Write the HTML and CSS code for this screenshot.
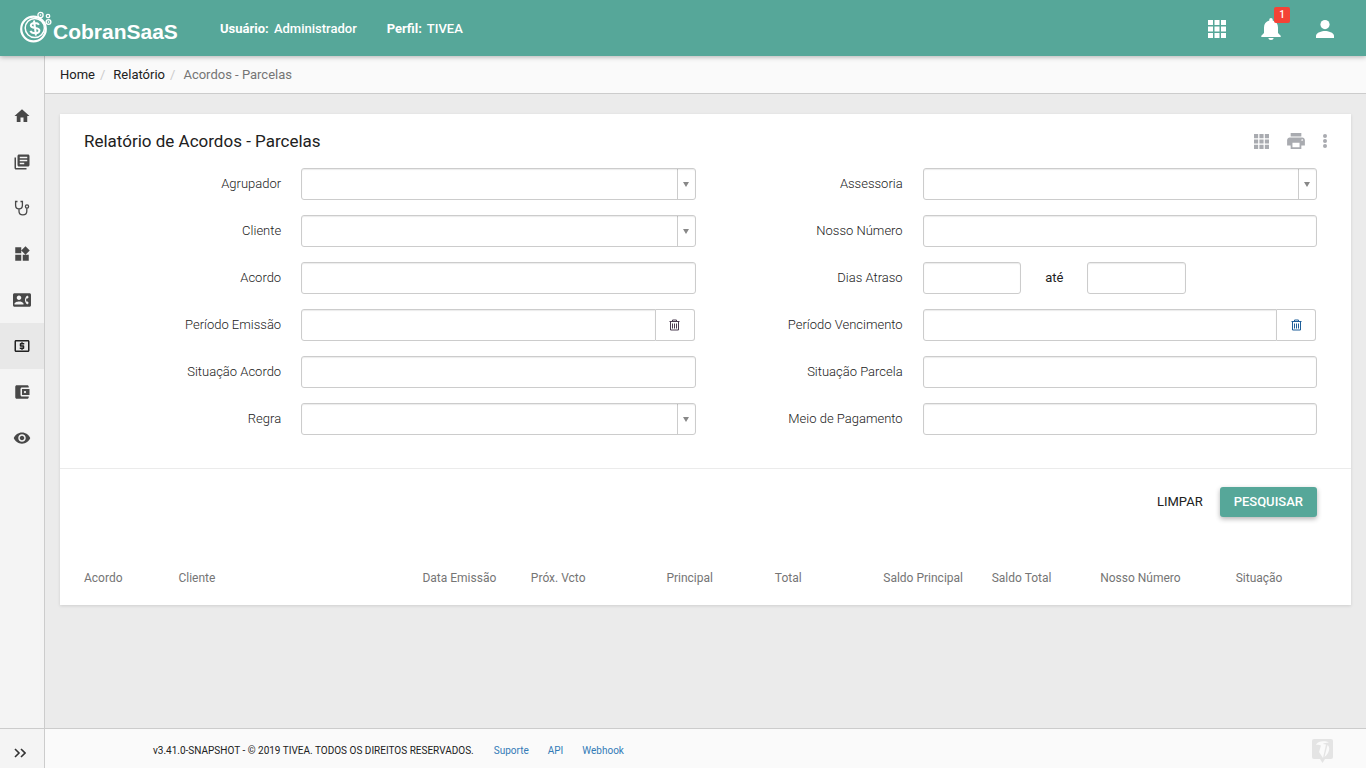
FILE: index.html
```html
<!DOCTYPE html>
<html lang="pt-BR">
<head>
  <meta charset="UTF-8" />
  <meta name="viewport" content="width=device-width, initial-scale=1.0"/>
  <title>CobranSaaS - Relatório de Acordos</title>
  <link rel="stylesheet" href="styles.css">
</head>
<body>

  <header class="topbar">
    <a class="brand" href="#">
      <svg width="33" height="34" viewBox="0 0 33 34" fill="none" stroke="#fff" aria-hidden="true">
        <circle cx="13.500" cy="18" r="12.300" stroke-width="2.200"/>
        <circle cx="14.800" cy="17" r="9.600" stroke-width="1.500"/>
        <path d="M19 13.800c-.8-1.300-2.300-1.800-4.200-1.800-2.300 0-4 1-4 2.600 0 3.600 8.600 1.400 8.600 4.900 0 1.700-1.900 2.700-4.300 2.700-2.200 0-4-.8-4.700-2.400M14 9.500l2 15" stroke-width="2"/>
        <circle cx="20.500" cy="4" r="2.600" stroke-width="1.300"/>
        <circle cx="20.500" cy="4" r="0.600"/>
        <circle cx="28" cy="5" r="1.700" stroke-width="1.300"/>
        <circle cx="28.500" cy="11" r="2.400" stroke-width="1.300"/>
        <circle cx="28.500" cy="11" r="0.600"/>
      </svg>
      <span>CobranSaaS</span>
    </a>
    <div class="user-info">
      <span><b>Usuário:</b> Administrador</span>
      <span><b>Perfil:</b> TIVEA</span>
    </div>
    <div class="top-actions">
      <button type="button" aria-label="Aplicativos">
        <svg width="18" height="18" viewBox="0 0 18 18" fill="currentColor"><path d="M0 0h5v5H0zM6.500 0h5v5h-5zM13 0h5v5h-5zM0 6.500h5v5H0zM6.500 6.500h5v5h-5zM13 6.500h5v5h-5zM0 13h5v5H0zM6.500 13h5v5h-5zM13 13h5v5h-5z"/></svg>
      </button>
      <button type="button" aria-label="Notificações">
        <svg width="20" height="22" viewBox="0 0 20 22" fill="currentColor"><path d="M10 22c1.500 0 2.600-.8 2.600-2H7.400c0 1.200 1.100 2 2.600 2zM17 15V9.500c0-3.500-1.900-6.200-5.300-7V1.700C11.700.8 11 0 10 0S8.300.8 8.300 1.700v.8C4.900 3.300 3 6 3 9.500V15L.3 17.700V19h19.400v-1.300z"/></svg>
        <span class="badge">1</span>
      </button>
      <button type="button" aria-label="Perfil">
        <svg width="18" height="18" viewBox="0 0 18 18" fill="currentColor"><circle cx="9" cy="4.600" r="4.600"/><path d="M9 11c-3 0-9 1.600-9 4.800V18h18v-2.200C18 12.600 12 11 9 11z"/></svg>
      </button>
    </div>
  </header>

  <div class="wrapper">
    <nav class="sidebar">
      <a href="#" aria-label="Início"><svg width="18" height="18" viewBox="0 0 24 24"><path d="M10 20v-6h4v6h5v-8h3L12 3 2 12h3v8z"/></svg></a>
      <a href="#" aria-label="Cadastros"><svg width="18" height="18" viewBox="0 0 24 24"><path d="M4 6H2v14c0 1.100.9 2 2 2h14v-2H4V6zm16-4H8c-1.100 0-2 .9-2 2v12c0 1.100.9 2 2 2h12c1.100 0 2-.9 2-2V4c0-1.100-.9-2-2-2zm-1 9H9V9h10v2zm-4 4H9v-2h6v2zm4-8H9V5h10v2z"/></svg></a>
      <a href="#" aria-label="Diagnóstico"><svg class="outline" width="16" height="16" viewBox="0 0 16 16"><path d="M3.500 1.500H1.600v3.700c0 2.200 1.300 3.700 3.400 3.700s3.400-1.500 3.400-3.700V1.500H6.500M5 9v2.300c0 2 1.500 3.600 3.800 3.600s4-1.600 4-3.600V8.200"/><circle cx="13" cy="6.500" r="1.600"/></svg></a>
      <a href="#" aria-label="Módulos"><svg width="18" height="18" viewBox="0 0 24 24"><path d="M13 13v8h8v-8h-8zM3 21h8v-8H3v8zM3 3v8h8V3H3zm13.660-1.310L11 7.340 16.660 13l5.660-5.660-5.660-5.650z"/></svg></a>
      <a href="#" aria-label="Contatos"><svg width="18" height="18" viewBox="0 0 24 24"><path d="M22 3H2C.9 3 0 3.900 0 5v14c0 1.100.9 2 2 2h20c1.100 0 1.990-.9 1.990-2L24 5c0-1.100-.9-2-2-2zM8 6c1.660 0 3 1.340 3 3s-1.340 3-3 3-3-1.340-3-3 1.340-3 3-3zm6 12H2v-1c0-2 4-3.100 6-3.100s6 1.100 6 3.100v1zm3.850-4h1.640L21 16l-1.990 1.990c-1.310-.98-2.280-2.380-2.730-3.990-.18-.64-.28-1.310-.28-2s.1-1.360.28-2c.45-1.620 1.420-3.010 2.730-3.990L21 8l-1.510 2h-1.640c-.22.630-.35 1.300-.35 2s.13 1.370.35 2z"/></svg></a>
      <a href="#" class="active" aria-label="Relatórios"><svg width="18" height="18" viewBox="0 0 24 24"><path d="M11 17h2v-1h1c.55 0 1-.45 1-1v-3c0-.55-.45-1-1-1h-3v-1h4V8h-2V7h-2v1h-1c-.55 0-1 .45-1 1v3c0 .55.45 1 1 1h3v1H9v2h2v1zm9-13H4c-1.110 0-1.990.89-1.990 2L2 18c0 1.110.89 2 2 2h16c1.110 0 2-.89 2-2V6c0-1.110-.89-2-2-2zm0 14H4V6h16v12z"/></svg></a>
      <a href="#" aria-label="Carteira"><svg width="18" height="18" viewBox="0 0 24 24"><path d="M21 18v1c0 1.100-.9 2-2 2H5c-1.110 0-2-.9-2-2V5c0-1.100.89-2 2-2h14c1.100 0 2 .9 2 2v1h-9c-1.110 0-2 .9-2 2v8c0 1.100.89 2 2 2h9zm-9-2h10V8H12v8zm4-2.500c-.83 0-1.500-.67-1.500-1.500s.67-1.500 1.500-1.500 1.500.67 1.500 1.500-.67 1.500-1.500 1.500z"/></svg></a>
      <a href="#" aria-label="Monitoramento"><svg width="18" height="18" viewBox="0 0 24 24"><path d="M12 4.500C7 4.500 2.730 7.610 1 12c1.730 4.390 6 7.500 11 7.500s9.270-3.110 11-7.500c-1.730-4.390-6-7.500-11-7.500zM12 17c-2.760 0-5-2.240-5-5s2.240-5 5-5 5 2.240 5 5-2.240 5-5 5zm0-8c-1.660 0-3 1.340-3 3s1.340 3 3 3 3-1.340 3-3-1.340-3-3-3z"/></svg></a>
    </nav>

    <div class="content">
      <nav class="breadcrumb">
        <a href="#">Home</a>
        <a href="#">Relatório</a>
        <span>Acordos - Parcelas</span>
      </nav>

      <main class="card">
        <div class="card-header">
          <h1>Relatório de Acordos - Parcelas</h1>
          <div class="card-actions">
            <button type="button" aria-label="Colunas"><svg width="15" height="15" viewBox="0 0 18 18"><path d="M0 0h5v5H0zM6.500 0h5v5h-5zM13 0h5v5h-5zM0 6.500h5v5H0zM6.500 6.500h5v5h-5zM13 6.500h5v5h-5zM0 13h5v5H0zM6.500 13h5v5h-5zM13 13h5v5h-5z"/></svg></button>
            <button type="button" aria-label="Imprimir"><svg width="18" height="16" viewBox="2 3 20 18"><path d="M19 8H5c-1.660 0-3 1.340-3 3v6h4v4h12v-4h4v-6c0-1.660-1.340-3-3-3zm-3 11H8v-5h8v5zm3-7c-.55 0-1-.45-1-1s.45-1 1-1 1 .45 1 1-.45 1-1 1zm-1-9H6v4h12V3z"/></svg></button>
            <button type="button" aria-label="Mais opções"><svg width="4" height="14" viewBox="0 0 4 14"><circle cx="2" cy="2" r="2"/><circle cx="2" cy="7" r="2"/><circle cx="2" cy="12" r="2"/></svg></button>
          </div>
        </div>

        <form>
          <div class="fields">
            <div class="field">
              <label for="agrupador">Agrupador</label>
              <select id="agrupador"><option></option></select>
            </div>
            <div class="field">
              <label for="assessoria">Assessoria</label>
              <select id="assessoria"><option></option></select>
            </div>
            <div class="field">
              <label for="cliente">Cliente</label>
              <select id="cliente"><option></option></select>
            </div>
            <div class="field">
              <label for="nossoNumero">Nosso Número</label>
              <input type="text" id="nossoNumero">
            </div>
            <div class="field">
              <label for="acordo">Acordo</label>
              <input type="text" id="acordo">
            </div>
            <div class="field">
              <label for="diasDe">Dias Atraso</label>
              <div class="range">
                <input type="text" id="diasDe">
                <label for="diasAte">até</label>
                <input type="text" id="diasAte">
              </div>
            </div>
            <div class="field">
              <label for="emissao">Período Emissão</label>
              <div class="input-group">
                <input type="text" id="emissao">
                <button type="button" aria-label="Limpar período de emissão"><svg width="11" height="12" viewBox="0 0 11 12"><path d="M.5 2.500h10M3.500 2.500v-1.500h4v1.500M1.500 2.500v8.500h8V2.500M3.500 4.500v5M5.500 4.500v5M7.500 4.500v5"/></svg></button>
              </div>
            </div>
            <div class="field">
              <label for="vencimento">Período Vencimento</label>
              <div class="input-group">
                <input type="text" id="vencimento">
                <button type="button" class="blue" aria-label="Limpar período de vencimento"><svg width="11" height="12" viewBox="0 0 11 12"><path d="M.5 2.500h10M3.500 2.500v-1.500h4v1.500M1.500 2.500v8.500h8V2.500M3.500 4.500v5M5.500 4.500v5M7.500 4.500v5"/></svg></button>
              </div>
            </div>
            <div class="field">
              <label for="situacaoAcordo">Situação Acordo</label>
              <input type="text" id="situacaoAcordo">
            </div>
            <div class="field">
              <label for="situacaoParcela">Situação Parcela</label>
              <input type="text" id="situacaoParcela">
            </div>
            <div class="field">
              <label for="regra">Regra</label>
              <select id="regra"><option></option></select>
            </div>
            <div class="field">
              <label for="meioPagamento">Meio de Pagamento</label>
              <input type="text" id="meioPagamento">
            </div>
          </div>
          <div class="form-actions">
            <button type="reset" class="btn">LIMPAR</button>
            <button type="button" class="btn btn-primary">PESQUISAR</button>
          </div>
        </form>

        <table class="results">
          <colgroup>
            <col class="col-first"><col class="col-wide"><col class="col-std"><col class="col-mid"><col class="col-std">
            <col class="col-std"><col class="col-std"><col class="col-std"><col class="col-mid"><col>
          </colgroup>
          <thead>
            <tr>
              <th>Acordo</th>
              <th>Cliente</th>
              <th>Data Emissão</th>
              <th>Próx. Vcto</th>
              <th>Principal</th>
              <th>Total</th>
              <th>Saldo Principal</th>
              <th>Saldo Total</th>
              <th>Nosso Número</th>
              <th>Situação</th>
            </tr>
          </thead>
        </table>
      </main>
    </div>
  </div>

  <footer class="footer">
    <button type="button" class="expand" aria-label="Expandir menu">
      <svg width="12" height="10" viewBox="0 0 12 10"><path d="M1 1l4 4-4 4M7 1l4 4-4 4"/></svg>
    </button>
    <div class="footer-text">
      <span>v3.41.0-SNAPSHOT - © 2019 TIVEA. TODOS OS DIREITOS RESERVADOS.</span>
      <a href="#">Suporte</a>
      <a href="#">API</a>
      <a href="#">Webhook</a>
    </div>
    <svg class="footer-logo" width="21" height="24" viewBox="0 0 21 24"><path fill="#e4e4e4" d="M2 0h17a2 2 0 0 1 2 2v16a2 2 0 0 1-2 2h-6l-2.500 4L8 20H2a2 2 0 0 1-2-2V2a2 2 0 0 1 2-2z"/><path fill="#fafafa" d="M4 6c1-4 9-5 13-2.500-3 .2-5 .5-6 1.500l3 .5L11 19l-4-6 2-6.500C7 5.500 5.500 5.500 4 6zM15.500 6c3 2 2 8-3 12z"/></svg>
  </footer>

</body>
</html>
```
FILE: styles.css
```css
* {
  box-sizing: border-box;
}

body {
  margin: 0;
  min-height: 100vh;
  font-family: Roboto, 'Liberation Sans', sans-serif;
  font-size: 13px;
  color: #212121;
  background: #ebebeb;
  display: flex;
  flex-direction: column;
}

a {
  color: inherit;
  text-decoration: none;
}

button {
  font-family: inherit;
  padding: 0;
  border: none;
  background: none;
  color: inherit;
  cursor: pointer;
}

svg {
  display: block;
}

/* top bar */
.topbar {
  position: relative;
  height: 56px;
  padding: 0 14px 0 20px;
  background: #56a799;
  color: #fff;
  display: flex;
  align-items: center;
  box-shadow: 0 1px 5px rgba(0, 0, 0, 0.3);
}

.brand {
  width: 200px;
  display: flex;
  align-items: center;
  font-family: 'Liberation Sans', Arial, sans-serif;
  font-size: 21px;
  font-weight: bold;
}

.brand span {
  padding-top: 8px;
}

.user-info {
  flex: 1;
  display: flex;
  gap: 30px;
  font-weight: 500;
}

.user-info b {
  margin-right: 2px;
}

.top-actions {
  display: flex;
}

.top-actions button {
  position: relative;
  width: 54px;
  height: 56px;
  padding-top: 2px;
  display: flex;
  align-items: center;
  justify-content: center;
}

.badge {
  position: absolute;
  top: 7px;
  right: 8px;
  width: 16px;
  height: 16px;
  border-radius: 2px;
  background: #f44336;
  font-size: 10px;
  font-weight: 500;
  line-height: 16px;
}

/* sidebar */
.wrapper {
  flex: 1;
  display: flex;
}

.sidebar {
  width: 45px;
  padding-top: 37px;
  background: #f4f4f4;
  border-right: 1px solid #ccc;
}

.sidebar a {
  height: 46px;
  display: flex;
  align-items: center;
  justify-content: center;
  color: #484848;
}

.sidebar a.active {
  background: #e8e8e8;
  color: #212121;
}

.sidebar svg {
  fill: currentColor;
}

.sidebar svg.outline {
  fill: none;
  stroke: currentColor;
  stroke-width: 1.3;
}

.content {
  flex: 1;
  min-width: 0;
}

.breadcrumb {
  height: 38px;
  padding: 0 15px;
  background: #fafafa;
  border-bottom: 1px solid #ccc;
  display: flex;
  align-items: center;
}

.breadcrumb span {
  color: #757575;
}

.breadcrumb a::after {
  content: "/";
  margin: 0 8px 0 5px;
  color: #ccc;
}

/* card */
.card {
  margin: 20px 15px;
  background: #fff;
  box-shadow: 0 1px 3px rgba(0, 0, 0, 0.12);
}

.card-header {
  height: 54px;
  padding: 0 24px;
  display: flex;
  align-items: center;
  justify-content: space-between;
}

.card-header h1 {
  margin: 0;
  font-size: 17px;
  font-weight: 400;
}

.card-actions {
  display: flex;
  align-items: center;
  gap: 18px;
  color: #a9abb0;
}

.card-actions svg {
  fill: currentColor;
}

.fields {
  padding: 0 24px 33px;
  display: grid;
  grid-template-columns: 1fr 1fr;
  row-gap: 15px;
}

.field {
  display: grid;
  grid-template-columns: 1fr 2fr;
  align-items: center;
}

.field > * {
  margin: 0 10px;
}

.field label {
  padding-bottom: 2px;
  font-weight: 300;
  text-align: right;
}

.field input,
.field select {
  min-width: 0;
  height: 32px;
  padding: 0 8px;
  border: 1px solid #ccc;
  border-radius: 3px;
  background-color: #fff;
  box-shadow: inset 0 1px 1px rgba(0, 0, 0, 0.08);
  font-family: inherit;
  font-size: 13px;
  color: #212121;
}

.field select {
  appearance: none;
  padding-right: 24px;
  background-image:
    url("data:image/svg+xml,%3Csvg xmlns='http://www.w3.org/2000/svg' width='6' height='5'%3E%3Cpath d='M0 0h6L3 5z' fill='%23888'/%3E%3C/svg%3E"),
    linear-gradient(#ccc, #ccc);
  background-size: 6px 5px, 1px 100%;
  background-position: right 6px center, right 17px top;
  background-repeat: no-repeat;
}

.range {
  display: flex;
  align-items: center;
}

.range input {
  width: 25%;
}

.range label {
  width: 66px;
  font-weight: 400;
  text-align: center;
}

.input-group {
  display: flex;
  padding-right: 1px;
}

.input-group input {
  flex: 1;
  border-radius: 3px 0 0 3px;
}

.input-group button {
  width: 39px;
  border: 1px solid #ccc;
  border-left: none;
  border-radius: 0 3px 3px 0;
  display: flex;
  align-items: center;
  justify-content: center;
  color: #4a3c50;
}

.input-group button.blue {
  color: #1f5f99;
}

.input-group svg {
  fill: none;
  stroke: currentColor;
}

.form-actions {
  padding: 18px 34px;
  border-top: 1px solid #ebebeb;
  display: flex;
  justify-content: flex-end;
  gap: 3px;
}

.btn {
  height: 30px;
  padding: 0 14px 2px;
  border-radius: 3px;
  font-size: 13px;
  font-weight: 400;
}

.btn-primary {
  background: #56a799;
  color: #fff;
  font-weight: 500;
  box-shadow: 0 2px 5px rgba(0, 0, 0, 0.3);
}

/* results table */
.results {
  width: 100%;
  margin-top: 15px;
  table-layout: fixed;
  border-collapse: collapse;
}

.results th {
  height: 55px;
  padding: 0 0 0 10px;
  font-size: 12px;
  font-weight: 400;
  text-align: left;
  color: #757575;
}

.results th:first-child {
  padding-left: 24px;
}

.col-first,
.col-std {
  width: 8.4%;
}

.col-wide {
  width: 18.9%;
}

.col-mid {
  width: 10.5%;
}

/* footer */
.footer {
  height: 40px;
  padding-right: 33px;
  background: #fafafa;
  border-top: 1px solid #ccc;
  display: flex;
  align-items: center;
  font-size: 10px;
}

.expand {
  width: 45px;
  height: 100%;
  padding: 8px 4px 0 0;
  background: #f4f4f4;
  border-right: 1px solid #ccc;
  display: flex;
  align-items: center;
  justify-content: center;
}

.expand svg {
  fill: none;
  stroke: #333;
  stroke-width: 1.6;
}

.footer-text {
  flex: 1;
  padding: 4px 0 0 108px;
  display: flex;
}

.footer-text a {
  margin-left: 19px;
  color: #337ab7;
}

.footer-text a:first-of-type {
  margin-left: 20px;
}

.footer-logo {
  margin-top: 4px;
}
```
